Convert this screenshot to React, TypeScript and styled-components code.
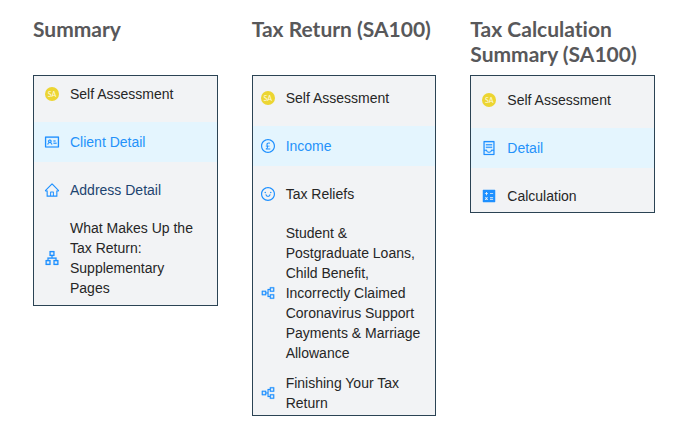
import React from "react";
import styled, { createGlobalStyle } from "styled-components";
import {
  AiFillCalculator,
  AiOutlineApartment,
  AiOutlineContainer,
  AiOutlineHome,
  AiOutlineIdcard,
  AiOutlinePartition,
  AiOutlinePoundCircle,
  AiOutlineSmile,
} from "react-icons/ai";

const GlobalStyle = createGlobalStyle`
  *, *::before, *::after { box-sizing: border-box; }
  body {
    margin: 0;
    background: #ffffff;
    font-family: "Liberation Sans", Arial, sans-serif;
  }
`;

const Page = styled.main`
  display: grid;
  grid-template-columns: repeat(3, minmax(0, 1fr));
  column-gap: 34px;
  padding: 16px 18px 16px 33px;
`;

const Column = styled.section`
  display: flex;
  flex-direction: column;
`;

const Heading = styled.h2`
  margin: 0 0 9px;
  min-height: 50px;
  color: #58585a;
  font-family: Lato, sans-serif;
  font-size: 21px;
  font-weight: 700;
  font-variant-ligatures: none;
  line-height: 25px;
`;

const Panel = styled.nav<{ $top: number }>`
  overflow: hidden;
  padding-top: ${(p) => p.$top}px;
  border: 1px solid #2b4354;
  background: #f2f3f5;
`;

const SectionTitle = styled.div<{ $inset: number }>`
  display: flex;
  align-items: center;
  gap: 10px;
  margin-bottom: 18px;
  padding: 0 12px 0 ${(p) => p.$inset}px;
  color: #262626;
  font-size: 14px;
  line-height: 20px;
`;

const IconSlot = styled.span<{ $heavy?: boolean }>`
  display: flex;
  flex: none;
  align-items: center;
  justify-content: center;
  width: 16px;
  height: 16px;
  color: #1e90ff;

  svg {
    width: 16px;
    height: 16px;
    stroke-width: ${(p) => (p.$heavy ? 12 : 0)};
  }
`;

const Badge = styled.span`
  display: flex;
  align-items: center;
  justify-content: center;
  width: 14px;
  height: 14px;
  border-radius: 50%;
  background: #ecd532;
  color: #fffbe0;
  font-family: Lato, sans-serif;
  font-size: 7px;
  line-height: 14px;
`;

const List = styled.ul<{ $bottom: number }>`
  display: flex;
  flex-direction: column;
  gap: 8px;
  margin: 0 0 ${(p) => p.$bottom}px;
  padding: 0;
  list-style: none;
`;

const Item = styled.a<{ $inset: number; $right: number; $pad: number; $tone: Tone }>`
  display: flex;
  align-items: center;
  gap: 10px;
  min-height: 40px;
  padding: ${(p) => p.$pad}px ${(p) => p.$right}px ${(p) => p.$pad}px ${(p) => p.$inset}px;
  background: ${(p) => (p.$tone === "active" ? "#e4f5fe" : "transparent")};
  color: ${(p) => ({ active: "#2492fa", visited: "#1d4470", plain: "#262626" })[p.$tone]};
  font-size: 14px;
  line-height: 20px;
  text-decoration: none;
`;

type Tone = "active" | "visited" | "plain";

interface Entry {
  label: string;
  icon: React.ReactNode;
  heavy?: boolean;
  tone?: Tone;
  pad?: number;
}

interface Menu {
  title: string;
  top: number;
  bottom: number;
  inset: number;
  right: number;
  entries: Entry[];
}

const menus: Menu[] = [
  {
    title: "Summary",
    top: 8,
    bottom: 7,
    inset: 10,
    right: 16,
    entries: [
      { label: "Client Detail", icon: <AiOutlineIdcard />, heavy: true, tone: "active" },
      { label: "Address Detail", icon: <AiOutlineHome />, tone: "visited" },
      {
        label: "What Makes Up the Tax Return: Supplementary Pages",
        icon: <AiOutlineApartment />,
        heavy: true,
      },
    ],
  },
  {
    title: "Tax Return (SA100)",
    top: 12,
    bottom: 1,
    inset: 7,
    right: 12,
    entries: [
      { label: "Income", icon: <AiOutlinePoundCircle />, tone: "active" },
      { label: "Tax Reliefs", icon: <AiOutlineSmile /> },
      {
        label:
          "Student & Postgraduate Loans, Child Benefit, Incorrectly Claimed Coronavirus Support Payments & Marriage Allowance",
        icon: <AiOutlinePartition />,
        heavy: true,
        pad: 1,
      },
      { label: "Finishing Your Tax Return", icon: <AiOutlinePartition />, heavy: true, pad: 1 },
    ],
  },
  {
    title: "Tax Calculation Summary (SA100)",
    top: 14,
    bottom: -4,
    inset: 10,
    right: 12,
    entries: [
      { label: "Detail", icon: <AiOutlineContainer />, heavy: true, tone: "active" },
      { label: "Calculation", icon: <AiFillCalculator /> },
    ],
  },
];

export default function App() {
  return (
    <>
      <GlobalStyle />
      <Page>
        {menus.map((menu) => (
          <Column key={menu.title}>
            <Heading>{menu.title}</Heading>
            <Panel $top={menu.top} aria-label={menu.title}>
              <SectionTitle $inset={menu.inset}>
                <IconSlot>
                  <Badge aria-hidden="true">SA</Badge>
                </IconSlot>
                <span>Self Assessment</span>
              </SectionTitle>
              <List $bottom={menu.bottom}>
                {menu.entries.map((entry) => (
                  <li key={entry.label}>
                    <Item
                      href="#"
                      $inset={menu.inset}
                      $right={menu.right}
                      $pad={entry.pad ?? 0}
                      $tone={entry.tone ?? "plain"}
                      aria-current={entry.tone === "active" ? "page" : undefined}
                    >
                      <IconSlot $heavy={entry.heavy}>{entry.icon}</IconSlot>
                      <span>{entry.label}</span>
                    </Item>
                  </li>
                ))}
              </List>
            </Panel>
          </Column>
        ))}
      </Page>
    </>
  );
}
